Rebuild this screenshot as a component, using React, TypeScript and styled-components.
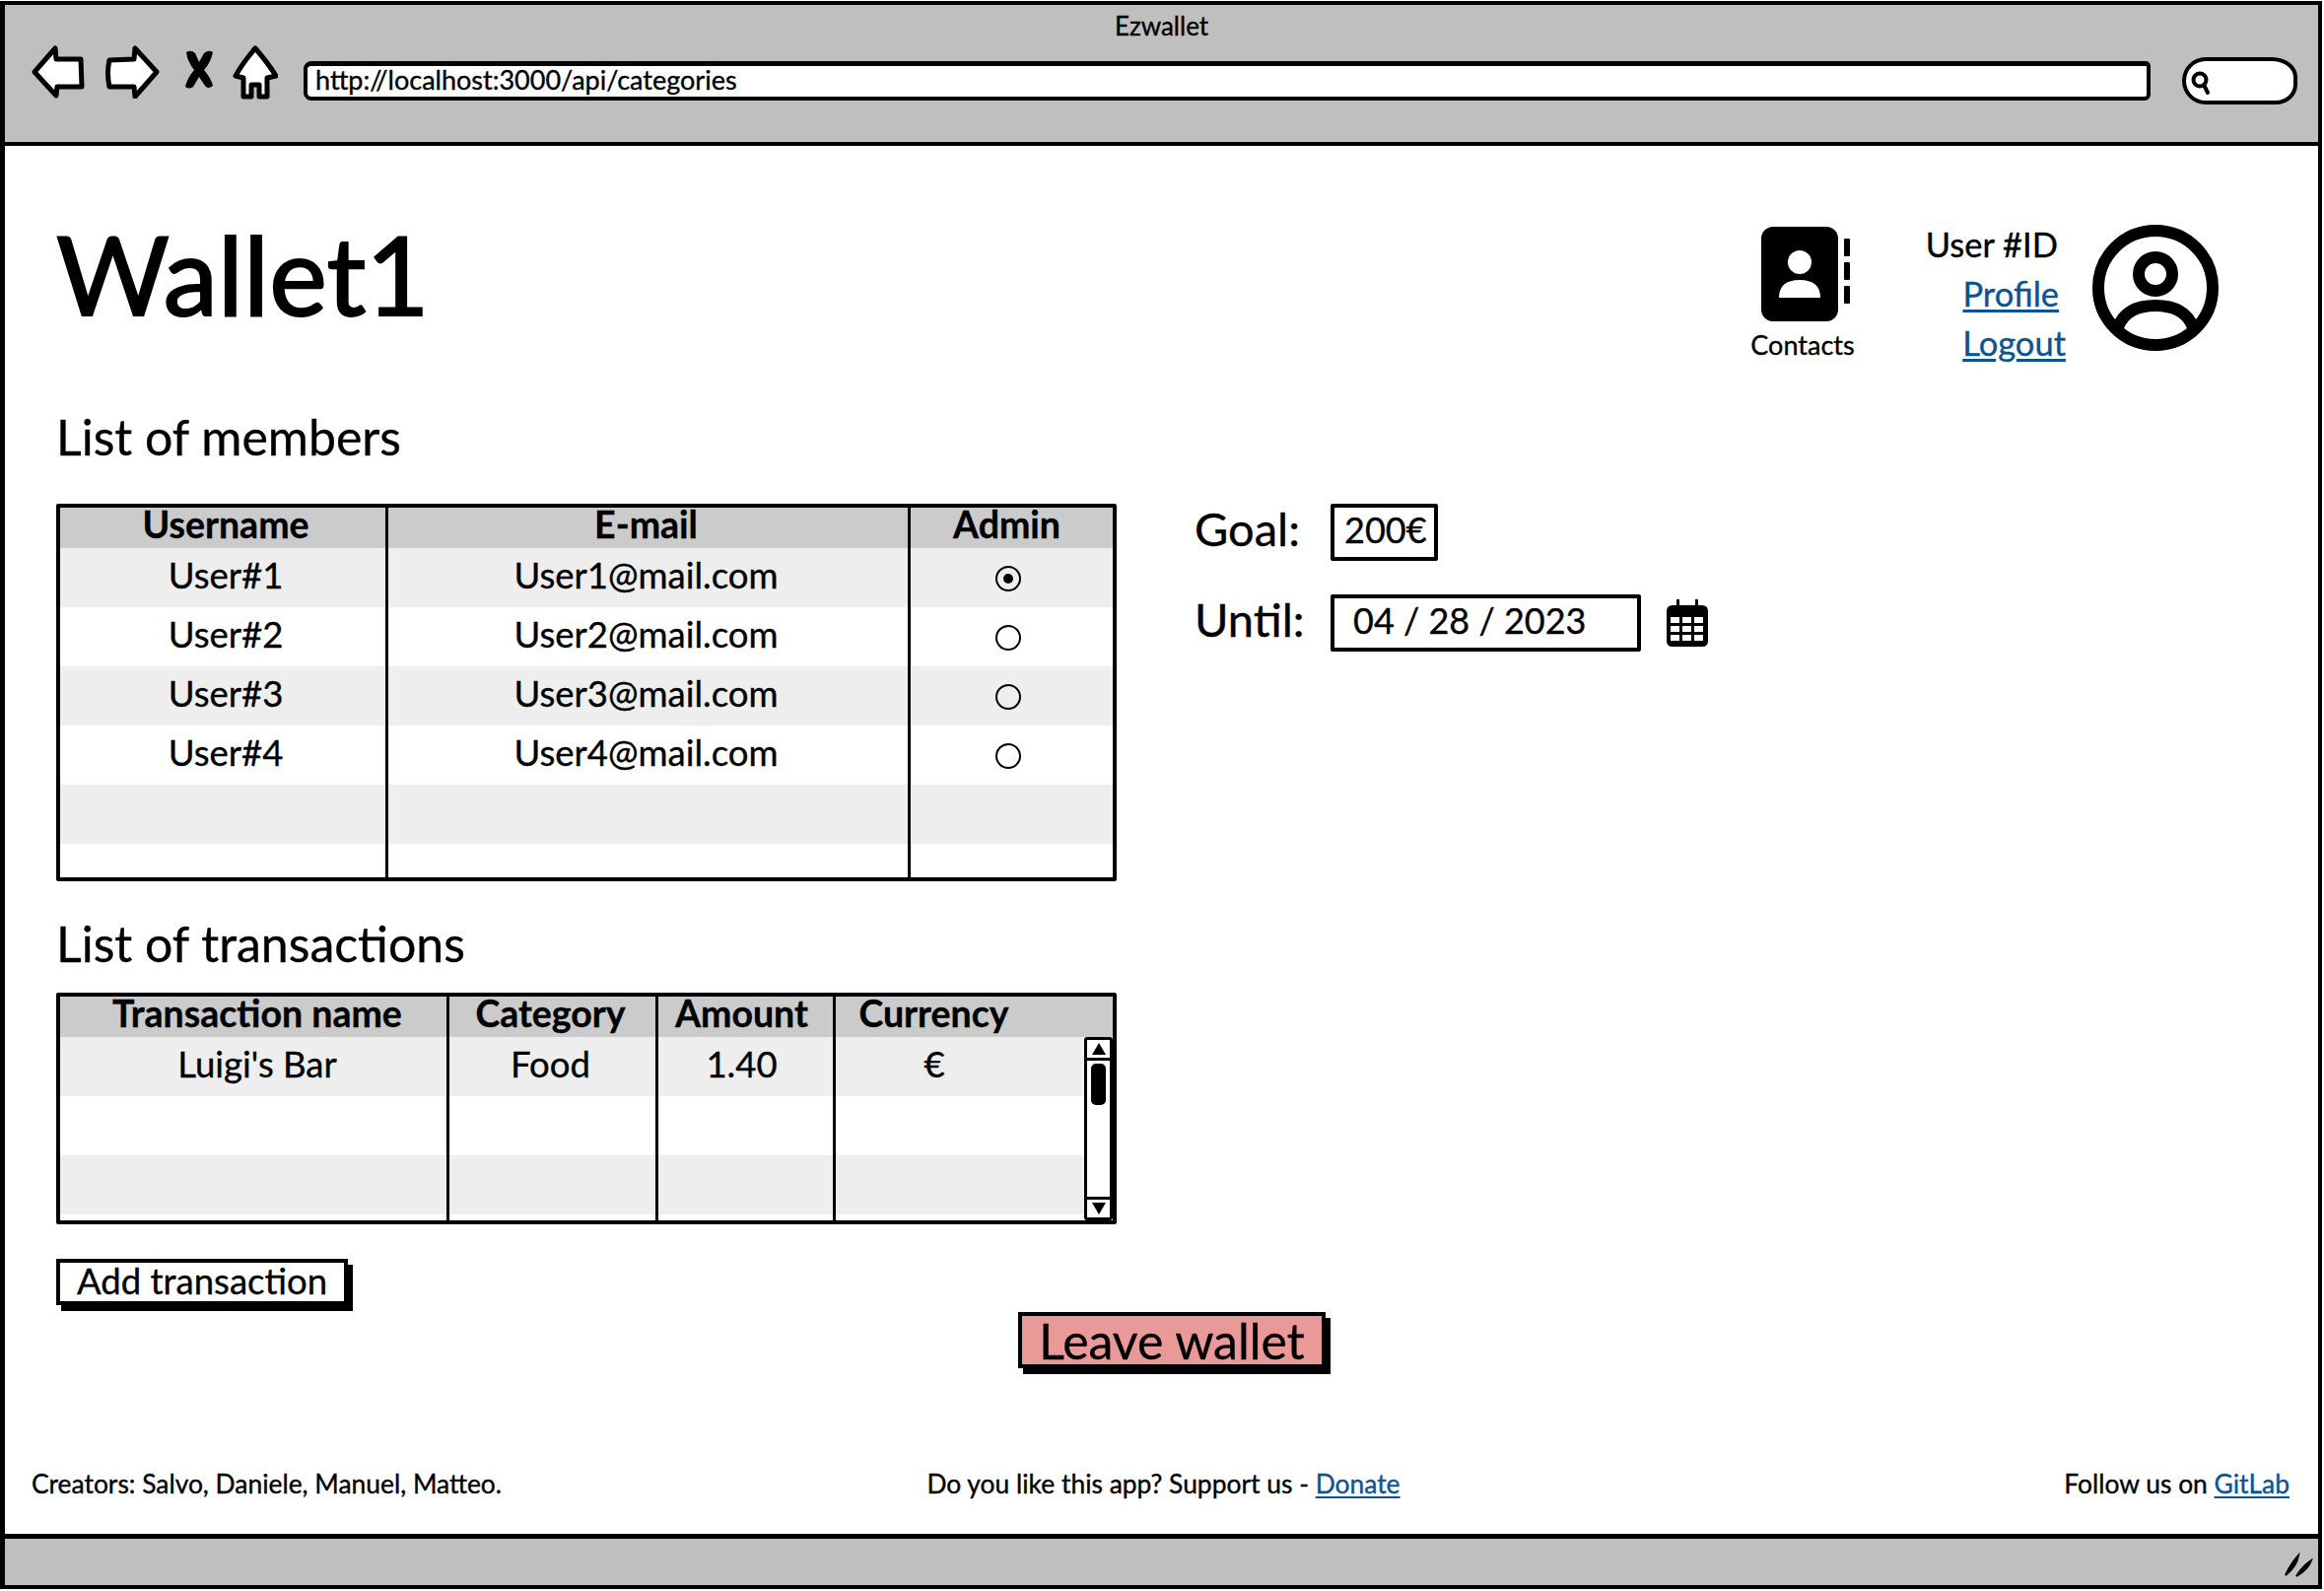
import React from 'react';
import styled, { createGlobalStyle } from 'styled-components';

const GlobalStyle = createGlobalStyle`
  html, body {
    margin: 0;
    padding: 0;
    background: #fff;
    color: #000;
    font-family: Lato, 'Noto Sans', sans-serif;
    -webkit-text-stroke: 0.35px currentColor;
  }
`;

const Frame = styled.div`
  box-sizing: border-box;
  width: 2356px;
  height: 1611px;
  margin-top: 1px;
  border: 4px solid #000;
  border-left-width: 5px;
  display: flex;
  flex-direction: column;
  overflow: hidden;
`;

const Chrome = styled.header`
  box-sizing: border-box;
  height: 143px;
  flex: none;
  background: #bfbfbf;
  border-bottom: 4px solid #000;
  padding-top: 6px;
`;

const WindowTitle = styled.div`
  text-align: center;
  font-size: 26px;
  line-height: 30px;
`;

const Toolbar = styled.div`
  display: flex;
  align-items: flex-start;
  margin-top: 5px;
  padding-left: 27px;
`;

const ToolIcon = styled.svg<{ $after: number }>`
  flex: none;
  margin-right: ${(p) => p.$after}px;
`;

const AddressBar = styled.div`
  box-sizing: border-box;
  width: 1874px;
  height: 40px;
  margin-top: 16px;
  padding-left: 8px;
  background: #fff;
  border: 4px solid #000;
  border-top-width: 5px;
  border-radius: 8px 5px 6px 8px;
  font-size: 27px;
  line-height: 28px;
`;

const SearchBox = styled.div`
  box-sizing: border-box;
  width: 117px;
  height: 48px;
  margin-left: 32px;
  margin-top: 12px;
  padding: 9px 0 0 4px;
  background: #fff;
  border: 4px solid #000;
  border-radius: 24px 26px 22px 24px / 24px 20px 20px 24px;
`;

const Main = styled.main`
  flex: 1;
  min-height: 0;
  display: flex;
  flex-direction: column;
`;

const Header = styled.div`
  box-sizing: border-box;
  height: 265px;
  padding: 78px 101px 0 52px;
  display: flex;
  justify-content: space-between;
  align-items: flex-start;
`;

const PageTitle = styled.h1`
  margin: 0;
  font-size: 111px;
  font-weight: 400;
  line-height: 102px;
  -webkit-text-stroke: 2px #000;
`;

const UserArea = styled.div`
  display: flex;
  align-items: flex-start;
`;

const ContactsBlock = styled.div`
  display: flex;
  flex-direction: column;
  align-items: center;
  width: 106px;
  margin-top: 4px;
  margin-right: 76px;
`;

const ContactsIcon = styled.svg`
  margin-left: 6px;
`;

const ContactsLabel = styled.span`
  font-size: 27px;
  line-height: 30px;
  margin-top: 9px;
  white-space: nowrap;
`;

const UserLinks = styled.div`
  display: flex;
  flex-direction: column;
  align-items: flex-end;
  width: 138px;
  margin-right: 27px;
  margin-top: -3px;
`;

const UserLine = styled.span<{ $inset?: number }>`
  font-size: 34.5px;
  line-height: 50px;
  white-space: nowrap;
  margin-right: ${(p) => p.$inset ?? 0}px;
`;

const Link = styled.a`
  color: #0b5394;
  text-decoration: underline;
  text-underline-offset: 3px;
`;

const Avatar = styled.svg`
  flex: none;
  margin-top: 2px;
`;

const Content = styled.div`
  display: flex;
  align-items: flex-start;
  padding-left: 52px;
`;

const LeftColumn = styled.div`
  width: 1076px;
  flex: none;
`;

const Heading = styled.h2<{ $below: number }>`
  margin: 0 0 ${(p) => p.$below}px;
  font-size: 50px;
  font-weight: 400;
  line-height: 60px;
`;

const Table = styled.div`
  box-sizing: border-box;
  border: 4px solid #000;
  border-radius: 2px;
`;

const Columns = styled.div<{ $cols: string }>`
  display: grid;
  grid-template-columns: ${(p) => p.$cols};
`;

const HeadCell = styled.div<{ $pad?: number; $right?: number }>`
  height: 41px;
  background: #cbcbcb;
  border-right: 3px solid #000;
  box-sizing: border-box;
  padding: 0 ${(p) => p.$right ?? 0}px 0 ${(p) => p.$pad ?? 0}px;
  text-align: center;
  font-size: 37.5px;
  font-weight: 700;
  line-height: 33px;
  white-space: nowrap;
  &:last-child {
    border-right: 0;
  }
`;

const TableBody = styled.div<{ $height: number }>`
  display: flex;
  height: ${(p) => p.$height}px;
  overflow: hidden;
`;

const Rows = styled.div`
  flex: 1;
  min-width: 0;
`;

const Row = styled(Columns)`
  height: 60px;
  &:nth-child(odd) > div {
    background: #eee;
  }
`;

const Cell = styled.div<{ $pad?: number; $right?: number }>`
  box-sizing: border-box;
  display: flex;
  align-items: center;
  justify-content: center;
  padding: 0 ${(p) => p.$right ?? 0}px 7px ${(p) => p.$pad ?? 0}px;
  border-right: 3px solid #000;
  font-size: 36.5px;
  &:last-child {
    border-right: 0;
  }
`;

const Radio = styled.span<{ $on?: boolean }>`
  box-sizing: border-box;
  display: flex;
  align-items: center;
  justify-content: center;
  width: 26px;
  height: 26px;
  margin-top: 8px;
  border: 2px solid #000;
  border-radius: 50%;
  &::after {
    content: '';
    display: ${(p) => (p.$on ? 'block' : 'none')};
    width: 10px;
    height: 10px;
    border-radius: 50%;
    background: #000;
  }
`;

const Scrollbar = styled.div`
  box-sizing: border-box;
  flex: none;
  width: 29px;
  height: 186px;
  background: #fff;
  border: 3px solid #000;
  border-radius: 3px;
  display: flex;
  flex-direction: column;
  justify-content: space-between;
`;

const ScrollEnd = styled.div<{ $down?: boolean }>`
  height: 18px;
  flex: none;
  display: flex;
  align-items: center;
  justify-content: center;
  border-${(p) => (p.$down ? 'top' : 'bottom')}: 3px solid #000;
  &::after {
    content: '';
    border-left: 7px solid transparent;
    border-right: 7px solid transparent;
    border-${(p) => (p.$down ? 'top' : 'bottom')}: 12px solid #000;
  }
`;

const ScrollThumb = styled.div`
  width: 15px;
  height: 42px;
  margin: 3px auto 0;
  background: #000;
  border-radius: 5px;
`;

const ScrollTrack = styled.div`
  flex: 1;
`;

const Spaced = styled.div`
  margin-bottom: 33px;
`;

const SketchButton = styled.button<{ $fill: string; $size: number; $w: number; $h: number }>`
  display: block;
  box-sizing: border-box;
  width: ${(p) => p.$w}px;
  height: ${(p) => p.$h}px;
  padding: 0 0 ${(p) => (p.$size > 40 ? 7 : 4)}px;
  background: ${(p) => p.$fill};
  border: 4px solid #000;
  box-shadow: 5px 6px 0 #000;
  color: #000;
  font-family: inherit;
  font-size: ${(p) => p.$size}px;
  line-height: 1;
`;

const AddRow = styled.div`
  margin-top: 35px;
`;

const GoalPanel = styled.div`
  margin: 98px 0 0 78px;
  display: flex;
  flex-direction: column;
  gap: 34px;
`;

const GoalRow = styled.div`
  display: flex;
  align-items: center;
`;

const GoalLabel = styled.span`
  width: 139px;
  padding: 0 0 8px 1px;
  box-sizing: border-box;
  font-size: 47px;
  line-height: 46px;
`;

const ValueBox = styled.div<{ $w: number }>`
  box-sizing: border-box;
  width: ${(p) => p.$w}px;
  height: 58px;
  padding-bottom: 6px;
  display: flex;
  align-items: center;
  background: #fff;
  border: 4px solid #000;
  border-radius: 2px;
`;

const ValueText = styled.span<{ $inset: number }>`
  margin-left: ${(p) => p.$inset}px;
  font-size: 36px;
  line-height: 40px;
  white-space: pre;
`;

const CalendarIcon = styled.svg`
  margin-left: 26px;
`;

const LeaveRow = styled.div`
  margin: 7px 0 0 1028px;
`;

const Footer = styled.footer`
  margin-top: auto;
  padding: 0 29px 36px 27px;
  display: grid;
  grid-template-columns: 1fr auto 1fr;
  font-size: 26.4px;
  line-height: 30px;
`;

const FooterMiddle = styled.span`
  padding-left: 6px;
`;

const FooterEnd = styled.span`
  text-align: right;
`;

const BottomBar = styled.div`
  box-sizing: border-box;
  height: 52px;
  flex: none;
  background: #bfbfbf;
  border-top: 5px solid #000;
  display: flex;
  justify-content: flex-end;
  align-items: center;
  padding: 6px 4px 0 0;
`;

const members = ['1', '2', '3', '4'];
const memberCols = '333px 530px 1fr';
const txCols = '395px 212px 180px 1fr';

const App: React.FunctionComponent = () => {
  return (
    <>
      <GlobalStyle />
      <Frame>
        <Chrome>
          <WindowTitle>Ezwallet</WindowTitle>
          <Toolbar>
            <ToolIcon $after={20} width='54' height='54' viewBox='0 0 54 54'>
              <path d='M3 27 L24 3 L25 14 L50 14 L51 42 L26 42 L25 51 Z' fill='#fff' stroke='#000' strokeWidth='5' strokeLinejoin='round' />
            </ToolIcon>
            <ToolIcon $after={25} width='56' height='54' viewBox='0 0 56 54'>
              <path d='M53 27 L31 3 L30 14 L5 15 Q2 28 5 42 L30 42 L31 52 Z' fill='#fff' stroke='#000' strokeWidth='5' strokeLinejoin='round' />
            </ToolIcon>
            <ToolIcon $after={19} width='30' height='54' viewBox='0 0 30 54'>
              <path d='M2 7 Q7 4 11 8 L15 17 L20 8 Q25 4 29 7 Q27 17 20 25 Q27 33 29 41 Q24 45 21 41 L15 32 L9 42 Q5 45 1 42 Q3 33 10 25 Q3 16 2 7 Z' fill='#000' />
            </ToolIcon>
            <ToolIcon $after={26} width='46' height='56' viewBox='0 0 46 56'>
              <path d='M23 3 Q36 18 44 31 L35 33 L35 52 L27 52 L27 40 L19 40 L19 52 L11 52 L11 33 L3 31 Q10 18 23 3 Z' fill='#fff' stroke='#000' strokeWidth='5' strokeLinejoin='round' />
            </ToolIcon>
            <AddressBar>http://localhost:3000/api/categories</AddressBar>
            <SearchBox>
              <svg width='24' height='26' viewBox='0 0 24 26'>
                <circle cx='10' cy='10' r='6.5' fill='none' stroke='#000' strokeWidth='4' />
                <path d='M14 15 L18 23' stroke='#000' strokeWidth='4' strokeLinecap='round' />
              </svg>
            </SearchBox>
          </Toolbar>
        </Chrome>
        <Main>
          <Header>
            <PageTitle>Wallet1</PageTitle>
            <UserArea>
              <ContactsBlock>
                <ContactsIcon width='90' height='96' viewBox='0 0 90 96'>
                  <rect width='78' height='96' rx='12' fill='#000' />
                  <rect x='84' y='12' width='6' height='18' rx='1' fill='#000' />
                  <rect x='84' y='36' width='6' height='18' rx='1' fill='#000' />
                  <rect x='84' y='60' width='6' height='18' rx='1' fill='#000' />
                  <ellipse cx='39' cy='36' rx='12' ry='12' fill='#fff' />
                  <path d='M18 72 Q18 54 39 54 Q60 54 60 72 Z' fill='#fff' />
                </ContactsIcon>
                <ContactsLabel>Contacts</ContactsLabel>
              </ContactsBlock>
              <UserLinks>
                <UserLine $inset={8}>User #ID</UserLine>
                <UserLine $inset={7}>
                  <Link>Profile</Link>
                </UserLine>
                <UserLine>
                  <Link>Logout</Link>
                </UserLine>
              </UserLinks>
              <Avatar width='128' height='128' viewBox='0 0 128 128'>
                <circle cx='64' cy='64' r='58' fill='none' stroke='#000' strokeWidth='12' />
                <circle cx='64' cy='50' r='17' fill='none' stroke='#000' strokeWidth='12' />
                <path d='M26 104 Q34 82 64 82 Q94 82 102 104' fill='none' stroke='#000' strokeWidth='12' />
              </Avatar>
            </UserArea>
          </Header>
          <Content>
            <LeftColumn>
              <Heading $below={38}>List of members</Heading>
              <Spaced>
                <Table>
                  <Columns $cols={memberCols}>
                    <HeadCell $pad={6}>Username</HeadCell>
                    <HeadCell $right={4}>E-mail</HeadCell>
                    <HeadCell $right={10}>Admin</HeadCell>
                  </Columns>
                  <TableBody $height={334}>
                    <Rows>
                      {members.map((n) => (
                        <Row $cols={memberCols} key={n}>
                          <Cell $pad={6}>User#{n}</Cell>
                          <Cell $right={4}>User{n}@mail.com</Cell>
                          <Cell $right={8}>
                            <Radio $on={n === '1'} />
                          </Cell>
                        </Row>
                      ))}
                      {[5, 6].map((n) => (
                        <Row $cols={memberCols} key={n}>
                          <Cell />
                          <Cell />
                          <Cell />
                        </Row>
                      ))}
                    </Rows>
                  </TableBody>
                </Table>
              </Spaced>
              <Heading $below={20}>List of transactions</Heading>
              <Table>
                <Columns $cols={txCols}>
                  <HeadCell $pad={8}>Transaction name</HeadCell>
                  <HeadCell $right={4}>Category</HeadCell>
                  <HeadCell $right={8}>Amount</HeadCell>
                  <HeadCell $right={82}>Currency</HeadCell>
                </Columns>
                <TableBody $height={186}>
                  <Rows>
                    <Row $cols={txCols}>
                      <Cell $pad={8}>Luigi's Bar</Cell>
                      <Cell $right={4}>Food</Cell>
                      <Cell $right={8}>1.40</Cell>
                      <Cell $right={52}>€</Cell>
                    </Row>
                    {[2, 3, 4].map((n) => (
                      <Row $cols={txCols} key={n}>
                        <Cell />
                        <Cell />
                        <Cell />
                        <Cell />
                      </Row>
                    ))}
                  </Rows>
                  <Scrollbar>
                    <ScrollEnd />
                    <ScrollThumb />
                    <ScrollTrack />
                    <ScrollEnd $down />
                  </Scrollbar>
                </TableBody>
              </Table>
              <AddRow>
                <SketchButton $fill='#fff' $size={36.5} $w={296} $h={47}>
                  Add transaction
                </SketchButton>
              </AddRow>
            </LeftColumn>
            <GoalPanel>
              <GoalRow>
                <GoalLabel>Goal:</GoalLabel>
                <ValueBox $w={109}>
                  <ValueText $inset={10}>200€</ValueText>
                </ValueBox>
              </GoalRow>
              <GoalRow>
                <GoalLabel>Until:</GoalLabel>
                <ValueBox $w={315}>
                  <ValueText $inset={19}>04 / 28 / 2023</ValueText>
                </ValueBox>
                <CalendarIcon width='42' height='48' viewBox='0 0 42 48'>
                  <path d='M10 0 h3 v6 h16 v-6 h3 v6 h4 q6 0 6 6 v30 q0 6 -6 6 h-30 q-6 0 -6 -6 v-30 q0 -6 6 -6 h4 Z' fill='#000' />
                  <g fill='#fff'>
                    {[18, 27, 36].map((y) =>
                      [4, 16, 28].map((x) => <rect key={`${x}-${y}`} x={x} y={y} width='9' height='6' />)
                    )}
                  </g>
                </CalendarIcon>
              </GoalRow>
            </GoalPanel>
          </Content>
          <LeaveRow>
            <SketchButton $fill='#ea9999' $size={50} $w={312} $h={57}>
              Leave wallet
            </SketchButton>
          </LeaveRow>
          <Footer>
            <span>Creators: Salvo, Daniele, Manuel, Matteo.</span>
            <FooterMiddle>
              Do you like this app? Support us - <Link>Donate</Link>
            </FooterMiddle>
            <FooterEnd>
              Follow us on <Link>GitLab</Link>
            </FooterEnd>
          </Footer>
        </Main>
        <BottomBar>
          <svg width='32' height='26' viewBox='0 0 32 26'>
            <path d='M3 23 Q8 12 16 3 Q14 14 3 23 Z M14 24 Q20 14 29 8 Q26 17 14 24 Z' fill='#000' stroke='#000' strokeWidth='2' />
          </svg>
        </BottomBar>
      </Frame>
    </>
  );
};

export default App;
